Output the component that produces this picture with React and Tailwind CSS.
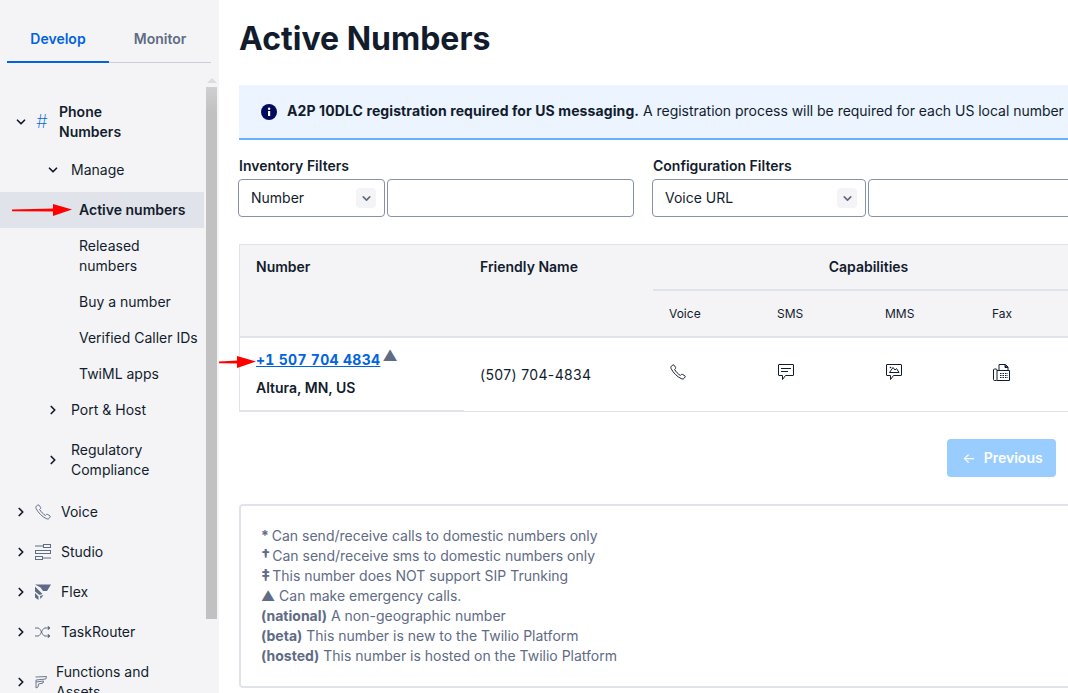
import { ChevronDown, ChevronRight } from "lucide-react";

const Arrow = ({ className, w = 60 }) => (
  <svg className={className} viewBox={`0 0 ${w} 12`} fill="none">
    <path d={`M0 5.5 L${w - 18} 4.5 L${w - 18} 7.5 L0 7.3 Z`} fill="#f00" />
    <path d={`M${w - 19} 0 L${w} 5.5 L${w - 19} 12 Z`} fill="#f00" />
  </svg>
);

const PhoneIcon = ({ className, color = "#121c2d" }) => (
  <svg className={className} viewBox="0 0 18 18" fill="none" stroke={color} strokeWidth="1.1">
    <path d="M3.2 1.2 L1.4 2.6 C0.6 3.3 0.9 4.6 1.6 5.8 C3.6 9.6 8 14.4 12.6 16.4 C14 17 15.2 17 15.8 16.2 L17 14.6 C17.3 14.1 17.2 13.6 16.7 13.3 L14 11.7 C13.5 11.4 13 11.5 12.6 11.9 L11.7 12.9 C9.4 11.6 6.6 8.6 5.2 6.2 L6.2 5.2 C6.6 4.8 6.6 4.3 6.3 3.9 L4.6 1.4 C4.2 0.9 3.7 0.9 3.2 1.2 Z" />
  </svg>
);

const SmsIcon = () => (
  <svg className="w-4 h-4 -mt-[5px] ml-[1px]" viewBox="0 0 16 16" fill="none" stroke="#121c2d" strokeWidth="1">
    <path d="M1 .5 H15 A.5 .5 0 0 1 15.5 1 V11 A.5 .5 0 0 1 15 11.5 H7.5 L4.5 15.5 V11.5 H1 A.5 .5 0 0 1 .5 11 V1 A.5 .5 0 0 1 1 .5 Z" strokeLinejoin="round" />
    <path d="M3 4.5 H13 M3 7.5 H10" />
  </svg>
);

const MmsIcon = () => (
  <svg className="w-4 h-4 -mt-[5px] ml-[1px]" viewBox="0 0 16 16" fill="none" stroke="#121c2d" strokeWidth="1">
    <path d="M1 .5 H15 A.5 .5 0 0 1 15.5 1 V11 A.5 .5 0 0 1 15 11.5 H7.5 L4.5 15.5 V11.5 H1 A.5 .5 0 0 1 .5 11 V1 A.5 .5 0 0 1 1 .5 Z" strokeLinejoin="round" />
    <path d="M3.5 8.5 L7 3.5 L9 6 L10.5 4.5 L13 8.5 Z" />
    <circle cx="4.5" cy="3.5" r="0.8" fill="#121c2d" stroke="none" />
  </svg>
);

const FaxIcon = () => (
  <svg className="w-[17px] h-[17px] -mt-[5px] ml-[1px]" viewBox="0 0 17 17" fill="none" stroke="#121c2d" strokeWidth="1">
    <rect x="0.5" y="5" width="3.5" height="11.5" rx="1" />
    <path d="M4 6.5 H16.5 V16.5 H4" />
    <path d="M6 6.5 V0.5 H12.5 L15 3 V6.5" />
    <path d="M7 9.5 H15 M7 11.5 H15 M7 13.5 H15" strokeDasharray="1.5 1" />
    <path d="M12 1 V3.5 H15" fill="#121c2d" />
  </svg>
);

const StudioIcon = () => (
  <svg className="w-4 h-4" viewBox="0 0 16 16" fill="none" stroke="#606b85" strokeWidth="1">
    <rect x="8.5" y=".5" width="7" height="3" />
    <rect x=".5" y="6.5" width="15" height="3" />
    <rect x=".5" y="12.5" width="7" height="3" />
    <path d="M0 2 H8.5 M7.5 14 H16" />
  </svg>
);

const FlexIcon = () => (
  <svg className="w-4 h-4" viewBox="0 0 16 16" fill="#606b85">
    <path d="M0 .5 H16 L12 7 L8 7 L5.5 3.5 Z" />
    <path d="M0 2.5 L7.5 10 L4.5 11 L0 7.5 Z" />
    <path d="M0 9 L3.5 12.5 L3.5 16 L0 13.5 Z" />
    <path d="M5 12 L8.5 11 L5.5 15 Z" />
  </svg>
);

const ShuffleIcon = () => (
  <svg className="w-4 h-3" viewBox="0 0 16 12" fill="none" stroke="#606b85" strokeWidth="1">
    <path d="M0 2 H3 C6 2 7 10 10 10 H12 M0 10 H3 C6 10 7 2 10 2 H12" />
    <path d="M13 0.5 L15 2 L13 3.5 Z M13 8.5 L15 10 L13 11.5 Z" fill="#606b85" />
  </svg>
);

const FunctionsIcon = () => (
  <svg className="w-3 h-[13px]" viewBox="0 0 12 13" fill="none" stroke="#606b85" strokeWidth="0.9">
    <path d="M0.5 1 L11.5 0.5 L10.8 3 L1 4 V12 L3 11 L3.5 8 L8 7 L8.5 5 L1 6" />
  </svg>
);

const ProductRow = ({ icon, label }) => (
  <div className="h-10 flex items-center">
    <ChevronRight className="w-[14px] h-[14px] ml-[14px] text-[#121c2d]" strokeWidth={3} />
    <div className="w-[18px] ml-[6px] flex justify-center">{icon}</div>
    <span className="ml-[9px] pb-[2px]">{label}</span>
  </div>
);

const SubLink = ({ children, active }) => (
  <div className={`pl-[79px] pr-[5px] py-2 leading-5 ${active ? "bg-[#e1e3ea] font-semibold" : ""}`}>{children}</div>
);

const Sidebar = () => (
  <div className="w-[219px] shrink-0 h-full bg-[#f4f4f6] flex flex-col overflow-hidden relative text-[14px] text-[#121c2d]">
    <div className="mx-[7px] flex h-[63px] shrink-0 font-semibold">
      <div className="w-[102px] pt-[28px] text-center text-[#0263e0] border-b-2 border-[#0263e0]">Develop</div>
      <div className="w-[102px] pt-[28px] text-center text-[#606b85] border-b border-[#cacdd8]">Monitor</div>
    </div>
    <div className="flex flex-1 min-h-0">
      <div className="w-[204px] pt-[39px] shrink-0 overflow-hidden">
        <div className="flex items-center h-10 mb-[10px]">
          <ChevronDown className="w-[14px] h-[14px] ml-[14px]" strokeWidth={3} />
          <span className="ml-[7px] w-[14px] text-[#0263e0] text-[18px] font-extralight text-center leading-none">#</span>
          <span className="ml-[10px] w-[90px] font-semibold leading-5">Phone Numbers</span>
        </div>
        <div className="flex items-center h-9 leading-5">
          <ChevronDown className="w-[14px] h-[14px] ml-[46px]" strokeWidth={3} />
          <span className="ml-[11px]">Manage</span>
        </div>
        <div className="mt-[4px]">
          <SubLink active>Active numbers</SubLink>
          <SubLink>Released numbers</SubLink>
          <SubLink>Buy a number</SubLink>
          <SubLink>Verified Caller IDs</SubLink>
          <SubLink>TwiML apps</SubLink>
        </div>
        <div className="h-9 flex items-center">
          <ChevronRight className="w-[14px] h-[14px] ml-[46px]" strokeWidth={3} />
          <span className="ml-[11px] pb-[2px]">Port &amp; Host</span>
        </div>
        <div className="h-14 flex items-center mt-1 mb-1">
          <ChevronRight className="w-[14px] h-[14px] ml-[46px]" strokeWidth={3} />
          <span className="ml-[11px] leading-5 w-[110px]">Regulatory Compliance</span>
        </div>
        <ProductRow icon={<PhoneIcon className="w-4 h-4" color="#606b85" />} label="Voice" />
        <ProductRow icon={<StudioIcon />} label="Studio" />
        <ProductRow icon={<FlexIcon />} label="Flex" />
        <ProductRow icon={<ShuffleIcon />} label="TaskRouter" />
        <div className="flex items-center h-[60px]">
          <ChevronRight className="w-[14px] h-[14px] ml-[14px] shrink-0" strokeWidth={3} />
          <div className="w-[18px] ml-[4px] flex justify-center shrink-0"><FunctionsIcon /></div>
          <span className="ml-[6px] w-[120px] leading-5">Functions and Assets</span>
        </div>
      </div>
      <div className="w-[11px] ml-[2px] shrink-0 mt-[15px]">
        <div className="mx-auto w-0 h-0 border-x-[5px] border-x-transparent border-b-[5px] border-b-[#dcdcdc]" />
        <div className="mt-[4px] h-[532px] bg-gradient-to-b from-[#cfcfcf] via-[#c1c1c1] via-[5%] to-[#c1c1c1]" />
      </div>
    </div>
    <Arrow className="absolute left-[12px] top-[204px] w-[60px] h-[12px]" />
  </div>
);

const Filter = ({ title, select, selectW, inputW }) => (
  <div className="shrink-0">
    <div className="pl-[1px] text-[14px] font-semibold leading-5 text-[#121c2d]">{title}</div>
    <div className="flex gap-[2px] mt-[3px]">
      <div className={`${selectW} h-[38px] bg-white rounded-[4px] border border-[#8891aa] flex items-center justify-between pl-[12px] pr-[8px] text-[14px] text-[#121c2d]`}>
        <span className="pb-[2px]">{select}</span>
        <div className="w-5 h-5 rounded-[4px] bg-[#f4f4f6] flex items-center justify-center">
          <ChevronDown className="w-[13px] h-[13px] text-[#606b85]" strokeWidth={3} />
        </div>
      </div>
      <div className={`${inputW} h-[38px] bg-white rounded-[4px] border border-[#8891aa] shrink-0`} />
    </div>
  </div>
);

const Table = () => (
  <div className="relative mt-[27px] w-[900px] text-[14px] text-[#121c2d] grid grid-cols-[225px_189px_108px_108px_108px_162px]">
    <div className="row-span-2 bg-[#f4f4f6] border-t border-l border-[#e1e3ea] pl-4 pt-[12px] font-semibold leading-5">Number</div>
    <div className="row-span-2 bg-[#f4f4f6] border-t border-[#e1e3ea] pl-4 pt-[12px] font-semibold leading-5">Friendly Name</div>
    <div className="col-span-4 bg-[#f4f4f6] border-t border-[#e1e3ea] h-[45px]">
      <div className="w-[431px] text-center pt-[12px] font-semibold leading-5">Capabilities</div>
    </div>
    <div className="col-span-4 bg-[#f4f4f6] border-t-2 border-[#e1e3ea] h-[47px] grid grid-cols-[108px_108px_108px_108px_162px] text-[12px] items-center">
      <span className="pl-4">Voice</span>
      <span className="pl-4">SMS</span>
      <span className="pl-4">MMS</span>
      <span className="pl-[15px]">Fax</span>
    </div>
    <div className="h-[76px] bg-white border-t-2 border-b-2 border-l border-[#e1e3ea] pl-4 pt-[12px]">
      <div className="flex items-start leading-5">
        <a className="font-bold tabular-nums tracking-[0.3px] text-[#0263e0] underline">+1 507 704 4834</a>
        <span className="ml-[2px] -mt-[4px] text-[#606b85] text-[15px]">▲</span>
      </div>
      <div className="font-semibold leading-5 mt-2">Altura, MN, US</div>
    </div>
    <div className="h-[76px] border-t-2 border-b border-[#e1e3ea] pl-4 flex items-center tracking-[0.35px] pb-[1px]">(507) 704-4834</div>
    <div className="h-[76px] border-t-2 border-b border-[#e1e3ea] pl-[17px] flex items-center"><PhoneIcon className="w-4 h-4 -mt-[5px]" /></div>
    <div className="h-[76px] border-t-2 border-b border-[#e1e3ea] pl-4 flex items-center"><SmsIcon /></div>
    <div className="h-[76px] border-t-2 border-b border-[#e1e3ea] pl-4 flex items-center"><MmsIcon /></div>
    <div className="h-[76px] border-t-2 border-b border-[#e1e3ea] pl-[15px] flex items-center"><FaxIcon /></div>
    <Arrow w={38} className="absolute left-[-21px] top-[112px] w-[38px] h-[12px]" />
  </div>
);

const Legend = () => (
  <div className="mt-[27px] w-[900px] h-[184px] rounded-[4px] border-2 border-[#e1e3ea] pl-[20px] pt-[20px] text-[14px] leading-5 text-[#606b85]">
    <div><b className="font-bold mr-[-1px]">*</b> Can send/receive calls to domestic numbers only</div>
    <div><b className="font-bold text-[16px] leading-none mr-[-2px]">†</b> Can send/receive sms to domestic numbers only</div>
    <div><b className="font-bold text-[16px] leading-none mr-[-2px]">‡</b> This number does NOT support SIP Trunking</div>
    <div>▲ Can make emergency calls.</div>
    <div><b className="font-bold">(national)</b> A non-geographic number</div>
    <div><b className="font-bold">(beta)</b> This number is new to the Twilio Platform</div>
    <div><b className="font-bold">(hosted)</b> This number is hosted on the Twilio Platform</div>
  </div>
);

export default function App() {
  return (
    <div className="w-[1068px] h-[693px] flex overflow-hidden bg-white font-['Inter',sans-serif]">
      <Sidebar />
      <div className="flex-1 min-w-0 overflow-hidden pl-[20px]">
        <h1 className="mt-[19px] text-[32px] leading-10 font-bold text-[#121c2d]">Active Numbers</h1>
        <div className="mt-[26px] w-[900px] h-[55px] bg-[#ebf4ff] border-b-2 border-[#66b3ff] flex items-center pl-[22px] text-[14px] text-[#121c2d] whitespace-nowrap">
          <svg className="w-4 h-4 shrink-0" viewBox="0 0 16 16">
            <circle cx="8" cy="8" r="8" fill="#030b5d" />
            <rect x="7" y="7" width="2.2" height="5" fill="#fff" />
            <circle cx="8.1" cy="4.8" r="1.2" fill="#fff" />
          </svg>
          <span className="ml-[10px] pb-[2px] tracking-[-0.03px]"><b className="font-bold tracking-[0.1px]">A2P 10DLC registration required for US messaging.</b> A registration process will be required for each US local number</span>
        </div>
        <div className="mt-[16px] flex -ml-[1px]">
          <div className="w-[414px] shrink-0">
            <Filter title="Inventory Filters" select="Number" selectW="w-[147px]" inputW="w-[247px]" />
          </div>
          <Filter title="Configuration Filters" select="Voice URL" selectW="w-[214px]" inputW="w-[300px]" />
        </div>
        <Table />
        <div className="mt-[27px] w-[817px] flex justify-end">
          <div className="w-[109px] h-[38px] pb-[2px] pl-[2px] rounded-[4px] bg-[#99cdff] text-white text-[14px] font-semibold flex items-center justify-center gap-[8px]">
            <span className="font-normal">←</span>Previous
          </div>
        </div>
        <Legend />
      </div>
    </div>
  );
}
